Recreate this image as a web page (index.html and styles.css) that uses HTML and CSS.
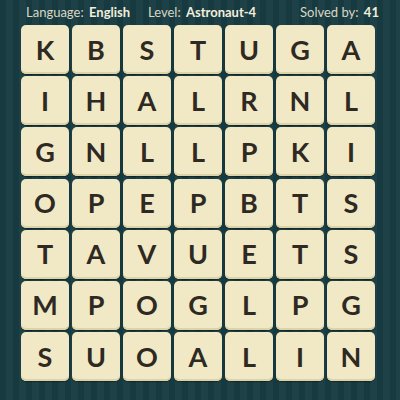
FILE: index.html
```html
<!DOCTYPE html>
<html>
<head>
<meta charset="utf-8">
<link rel="stylesheet" href="styles.css">
</head>
<body>
<div class="page">
  <div class="header">
    <span class="item lang">Language: <b>English</b></span>
    <span class="item level">Level: <b>Astronaut-4</b></span>
    <span class="item solved">Solved by: <b>41</b></span>
  </div>
  <div class="grid">
    <div class="tile">K</div><div class="tile">B</div><div class="tile">S</div><div class="tile">T</div><div class="tile">U</div><div class="tile">G</div><div class="tile">A</div>
    <div class="tile">I</div><div class="tile">H</div><div class="tile">A</div><div class="tile">L</div><div class="tile">R</div><div class="tile">N</div><div class="tile">L</div>
    <div class="tile">G</div><div class="tile">N</div><div class="tile">L</div><div class="tile">L</div><div class="tile">P</div><div class="tile">K</div><div class="tile">I</div>
    <div class="tile">O</div><div class="tile">P</div><div class="tile">E</div><div class="tile">P</div><div class="tile">B</div><div class="tile">T</div><div class="tile">S</div>
    <div class="tile">T</div><div class="tile">A</div><div class="tile">V</div><div class="tile">U</div><div class="tile">E</div><div class="tile">T</div><div class="tile">S</div>
    <div class="tile">M</div><div class="tile">P</div><div class="tile">O</div><div class="tile">G</div><div class="tile">L</div><div class="tile">P</div><div class="tile">G</div>
    <div class="tile">S</div><div class="tile">U</div><div class="tile">O</div><div class="tile">A</div><div class="tile">L</div><div class="tile">I</div><div class="tile">N</div>
  </div>
</div>
</body>
</html>
```
FILE: styles.css
```css
html, body {
  margin: 0;
  padding: 0;
}
body {
  width: 400px;
  height: 400px;
  overflow: hidden;
  background-color: #163a40;
  background-image: repeating-linear-gradient(90deg,
    rgba(255,255,255,0.00) 0px,
    rgba(255,255,255,0.00) 6px,
    rgba(255,255,255,0.035) 6px,
    rgba(255,255,255,0.035) 13px);
  font-family: "Lato", "Liberation Sans", sans-serif;
}
.page {
  width: 400px;
  height: 400px;
}
.header {
  display: flex;
  align-items: center;
  height: 23px;
  padding-left: 26px;
  color: #d9d6c4;
  font-size: 13px;
  white-space: nowrap;
}
.header b {
  font-weight: 700;
  color: #f2eedc;
  margin-left: 2px;
}
.lang { width: 122px; }
.level { width: 152px; }
.solved { }
.grid {
  display: grid;
  grid-template-columns: repeat(7, 48px);
  grid-auto-rows: 49px;
  column-gap: 3px;
  row-gap: 2.2px;
  margin-left: 21px;
  margin-top: 2px;
}
.tile {
  background: #f1e9c5;
  border-radius: 5px;
  box-shadow: inset 0 -2px 0 #ddd3a8, 0 1px 1px rgba(0,0,0,0.35);
  display: flex;
  align-items: center;
  justify-content: center;
  color: #2e2922;
  font-size: 27px;
  font-weight: 700;
  padding-bottom: 1px;
  box-sizing: border-box;
}
```
